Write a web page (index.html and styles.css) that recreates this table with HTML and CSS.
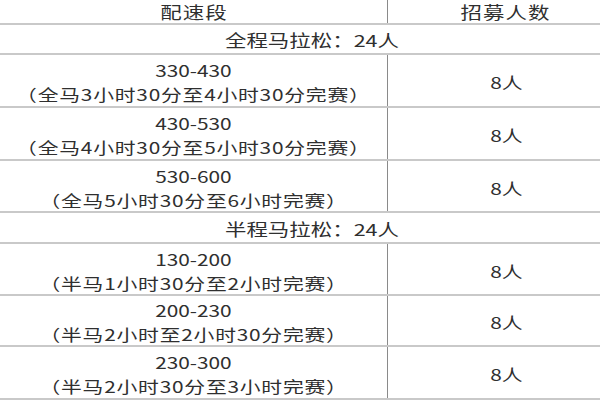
FILE: index.html
```html
<!DOCTYPE html>
<html lang="zh">
<head>
<meta charset="utf-8">
<link rel="stylesheet" href="styles.css">
</head>
<body>
<div class="table">
  <div class="row head h25">
    <div class="c1"><span class="t">配速段</span></div>
    <div class="c2"><span class="t">招募人数</span></div>
  </div>
  <div class="row group h30"><span class="t">全程马拉松：24人</span></div>
  <div class="row h53">
    <div class="c1"><span class="t">330-430</span><span class="t d">（全马3小时30分至4小时30分完赛）</span></div>
    <div class="c2"><span class="t">8人</span></div>
  </div>
  <div class="row h53">
    <div class="c1"><span class="t">430-530</span><span class="t d">（全马4小时30分至5小时30分完赛）</span></div>
    <div class="c2"><span class="t">8人</span></div>
  </div>
  <div class="row h52">
    <div class="c1"><span class="t">530-600</span><span class="t d">（全马5小时30分至6小时完赛）</span></div>
    <div class="c2"><span class="t">8人</span></div>
  </div>
  <div class="row group h31"><span class="t">半程马拉松：24人</span></div>
  <div class="row h52">
    <div class="c1"><span class="t">130-200</span><span class="t d">（半马1小时30分至2小时完赛）</span></div>
    <div class="c2"><span class="t">8人</span></div>
  </div>
  <div class="row h51">
    <div class="c1"><span class="t">200-230</span><span class="t d">（半马2小时至2小时30分完赛）</span></div>
    <div class="c2"><span class="t">8人</span></div>
  </div>
  <div class="row h53">
    <div class="c1"><span class="t">230-300</span><span class="t d">（半马2小时30分至3小时完赛）</span></div>
    <div class="c2"><span class="t">8人</span></div>
  </div>
</div>
</body>
</html>
```

FILE: styles.css
```css
html, body {
  margin: 0;
  padding: 0;
  background: #ffffff;
  overflow: hidden;
}
body {
  width: 600px;
  height: 400px;
  font-family: "Noto Sans CJK SC", "Noto Sans", sans-serif;
  color: #2f2f2f;
}
.table {
  width: 624px;
  display: flex;
  flex-direction: column;
}
.row {
  display: flex;
  box-sizing: border-box;
  border-bottom: 2px solid #c9c9c9;
  font-size: 16px;
  line-height: 24px;
}
.h25 { height: 25px; }
.h30 { height: 30px; }
.h31 { height: 31px; }
.h51 { height: 51px; }
.h52 { height: 52px; }
.h53 { height: 53px; }
.c1, .c2 {
  display: flex;
  flex-direction: column;
  align-items: center;
  justify-content: center;
  padding-top: 3px;
  box-sizing: border-box;
}
.c1 {
  width: 388px;
  border-right: 1px solid #8a8a8a;
}
.c2 {
  flex: 1;
}
.head {
  font-size: 16.5px;
  letter-spacing: 0.8px;
}
.head .c1, .head .c2 {
  padding-top: 0;
}
.group {
  font-size: 16.5px;
  align-items: center;
  justify-content: center;
  padding-top: 2px;
}
.t {
  display: inline-block;
  white-space: nowrap;
  transform: scaleX(1.3);
}
.d {
  letter-spacing: 0.6px;
}
```
